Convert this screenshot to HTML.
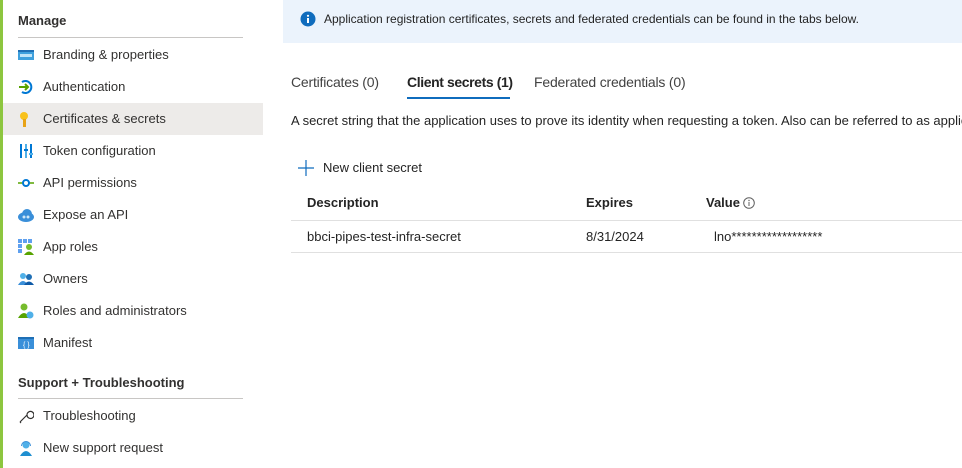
<!DOCTYPE html>
<html><head><meta charset="utf-8"><style>
*{margin:0;padding:0;box-sizing:border-box}
body{width:962px;height:468px;overflow:hidden;background:#fff;font-family:"Liberation Sans",sans-serif;font-size:13px;color:#323130;position:relative}
.abs{position:absolute;white-space:nowrap}
.bar{position:absolute;left:0;top:0;width:3px;height:468px;background:#8dc63f}
.item{position:absolute;left:3px;width:260px;height:32px;line-height:32px;padding-left:40px}
.item svg{position:absolute;left:15px;top:8px}
.sel{background:#edebe9}
.hd{position:absolute;left:18px;font-weight:bold;font-size:13px;color:#323130}
.ln{position:absolute;left:18px;width:225px;height:1px;background:#c8c6c4}
#main{position:absolute;left:0;top:0;width:962px;height:468px;overflow:hidden}
</style></head><body>
<div class="bar"></div>
<div class="hd" style="top:13px">Manage</div>
<div class="ln" style="top:37px"></div>
<div class="item" style="top:39px"><svg width="16" height="16"><rect x="0" y="3" width="16" height="10" fill="#3ea0dd"/><rect x="0" y="3" width="16" height="2" fill="#1f6fb5"/><rect x="2" y="7" width="12" height="3" fill="#bfe4f8"/></svg>Branding &amp; properties</div>
<div class="item" style="top:71px"><svg width="16" height="16"><path d="M4 3A6 6 0 1 1 4 13" stroke="#0078d4" stroke-width="2" fill="none"/><path d="M1 8H10M7 5l3 3-3 3" stroke="#57a300" stroke-width="2" fill="none"/></svg>Authentication</div>
<div class="item sel" style="top:103px"><svg width="16" height="16"><circle cx="6" cy="5" r="4" fill="#f8c21c"/><rect x="5" y="8" width="3" height="8" fill="#e8a317"/></svg>Certificates &amp; secrets</div>
<div class="item" style="top:135px"><svg width="16" height="16"><rect x="2" y="1" width="2" height="14" fill="#0078d4"/><rect x="7" y="1" width="2" height="14" fill="#50b0e8"/><rect x="12" y="1" width="2" height="14" fill="#0078d4"/><rect x="6" y="6" width="4" height="2" fill="#0078d4"/><rect x="11" y="10" width="4" height="2" fill="#50b0e8"/></svg>Token configuration</div>
<div class="item" style="top:167px"><svg width="16" height="16"><path d="M0 8H5M11 8H16" stroke="#57a300" stroke-width="1.5"/><circle cx="8" cy="8" r="3" fill="none" stroke="#0078d4" stroke-width="2"/></svg>API permissions</div>
<div class="item" style="top:199px"><svg width="16" height="16"><ellipse cx="8" cy="10" rx="8" ry="5" fill="#3a8fd9"/><circle cx="9" cy="7" r="5" fill="#3a8fd9"/><circle cx="6" cy="10" r="1.5" fill="#cfe7f8"/><circle cx="10" cy="10" r="1.5" fill="#cfe7f8"/></svg>Expose an API</div>
<div class="item" style="top:231px"><svg width="16" height="16"><g fill="#5ea0ef"><rect x="0" y="0" width="4" height="4"/><rect x="5" y="0" width="4" height="4"/><rect x="10" y="0" width="4" height="4"/><rect x="0" y="5" width="4" height="4"/><rect x="0" y="10" width="4" height="4"/></g><circle cx="11" cy="8" r="3" fill="#76bc2d"/><path d="M6 16Q11 9 16 16Z" fill="#57a300"/></svg>App roles</div>
<div class="item" style="top:263px"><svg width="16" height="16"><circle cx="5" cy="5" r="3" fill="#50b0e8"/><path d="M0 14Q5 6 10 14Z" fill="#3a8fd9"/><circle cx="11" cy="6" r="3" fill="#1f6fb5"/><path d="M6 14Q11 7 16 14Z" fill="#0e5aa7"/></svg>Owners</div>
<div class="item" style="top:295px"><svg width="16" height="16"><circle cx="6" cy="4" r="3.5" fill="#76bc2d"/><path d="M0 15Q6 5 12 15Z" fill="#57a300"/><circle cx="12" cy="12" r="3.5" fill="#50b0e8"/></svg>Roles and administrators</div>
<div class="item" style="top:327px"><svg width="16" height="16"><rect x="0" y="2" width="16" height="12" fill="#3a8fd9"/><rect x="0" y="2" width="16" height="2" fill="#1f6fb5"/><text x="5" y="12" font-size="7" fill="#fff" font-family="Liberation Sans">{ }</text></svg>Manifest</div>
<div class="hd" style="top:375px">Support + Troubleshooting</div>
<div class="ln" style="top:398px"></div>
<div class="item" style="top:400px"><svg width="16" height="16"><path d="M2 14L9 7M9 7a3.5 3.5 0 1 0 0-0.1M2 14l1 1" stroke="#323130" stroke-width="1.2" fill="none"/></svg>Troubleshooting</div>
<div class="item" style="top:432px"><svg width="16" height="16"><circle cx="8" cy="5" r="3.5" fill="#50b0e8"/><path d="M2 16Q8 6 14 16Z" fill="#1f8fd0"/><path d="M3.5 6A4.5 4.5 0 0 1 12.5 6" stroke="#3a8fd9" fill="none"/></svg>New support request</div>

<div id="main">
<div class="abs" style="left:283px;top:0;width:679px;height:43px;background:#ebf3fc"></div>
<svg class="abs" style="left:300px;top:11px" width="16" height="16"><circle cx="8" cy="8" r="7.5" fill="#0f6cbd"/><rect x="7" y="7" width="2" height="5" fill="#fff"/><circle cx="8" cy="4.8" r="1.1" fill="#fff"/></svg>
<div class="abs" style="left:324px;top:12px;font-size:12px;color:#242424">Application registration certificates, secrets and federated credentials can be found in the tabs below.</div>

<div class="abs" style="left:291px;top:74px;font-size:14px;color:#424242;letter-spacing:-0.2px">Certificates (0)</div>
<div class="abs" style="left:407px;top:74px;font-size:14px;color:#242424;font-weight:bold;letter-spacing:-0.4px">Client secrets (1)</div>
<div class="abs" style="left:407px;top:97px;width:103px;height:2px;background:#0f6cbd"></div>
<div class="abs" style="left:534px;top:74px;font-size:14px;color:#424242;letter-spacing:-0.2px">Federated credentials (0)</div>
<div class="abs" style="left:291px;top:113px;color:#242424;width:671px;overflow:hidden">A secret string that the application uses to prove its identity when requesting a token. Also can be referred to as application password.</div>

<svg class="abs" style="left:298px;top:160px" width="16" height="16"><path d="M8 0V16M0 8H16" stroke="#0f6cbd" stroke-width="1.2"/></svg>
<div class="abs" style="left:323px;top:160px;color:#242424">New client secret</div>

<div class="abs" style="left:307px;top:195px;font-weight:bold;color:#242424">Description</div>
<div class="abs" style="left:586px;top:195px;font-weight:bold;color:#242424">Expires</div>
<div class="abs" style="left:706px;top:195px;font-weight:bold;color:#242424">Value</div>
<svg class="abs" style="left:743px;top:197px" width="12" height="12"><circle cx="6" cy="6" r="5.3" fill="none" stroke="#616161"/><rect x="5.5" y="5" width="1" height="4" fill="#616161"/><circle cx="6" cy="3.5" r="0.7" fill="#616161"/></svg>
<div class="abs" style="left:291px;top:220px;width:671px;height:1px;background:#e0e0e0"></div>
<div class="abs" style="left:307px;top:229px;color:#242424">bbci-pipes-test-infra-secret</div>
<div class="abs" style="left:586px;top:229px;color:#242424">8/31/2024</div>
<div class="abs" style="left:714px;top:229px;color:#242424">lno******************</div>
<div class="abs" style="left:291px;top:252px;width:671px;height:1px;background:#e0e0e0"></div>
</div>
</body></html>
